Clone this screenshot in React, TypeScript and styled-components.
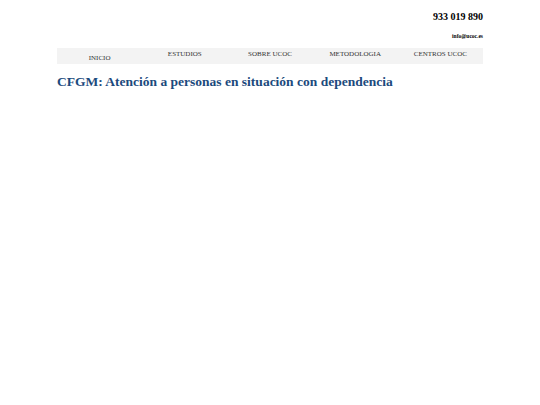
import React from 'react';
import styled, { createGlobalStyle } from 'styled-components';

const GlobalStyle = createGlobalStyle`
  body {
    margin: 0;
    background: #ffffff;
    font-family: "Liberation Serif", "Times New Roman", serif;
    color: #000;
  }
`;

const Page = styled.div`
  width: 426px;
  margin: 0 auto;
`;

const TopBar = styled.header`
  display: flex;
  flex-direction: column;
  align-items: flex-end;
  padding-top: 11px;
`;

const Phone = styled.div`
  font-size: 10px;
  font-weight: bold;
  line-height: 12px;
`;

const Email = styled.div`
  font-size: 5.5px;
  font-weight: bold;
  line-height: 6px;
  margin-top: 10px;
`;

const Nav = styled.nav`
  display: grid;
  grid-template-columns: repeat(5, 1fr);
  height: 16px;
  margin-top: 9px;
  background: #f3f3f3;
`;

const NavItem = styled.a<{ $low?: boolean }>`
  display: block;
  text-align: center;
  font-size: 7px;
  line-height: 8px;
  color: #333333;
  text-decoration: none;
  padding-top: ${(p) => (p.$low ? '6px' : '2px')};
`;

const Title = styled.h1`
  margin: 9px 0 0;
  font-size: 13.5px;
  line-height: 17px;
  font-weight: bold;
  color: #1c4a7d;
`;

const items = ['INICIO', 'ESTUDIOS', 'SOBRE UCOC', 'METODOLOGIA', 'CENTROS UCOC'];

export default function App() {
  return (
    <>
      <GlobalStyle />
      <Page>
        <TopBar>
          <Phone>933 019 890</Phone>
          <Email>info@ucoc.es</Email>
        </TopBar>
        <Nav>
          {items.map((item, i) => (
            <NavItem key={item} href="#" $low={i === 0}>
              {item}
            </NavItem>
          ))}
        </Nav>
        <Title>CFGM: Atención a personas en situación con dependencia</Title>
      </Page>
    </>
  );
}
